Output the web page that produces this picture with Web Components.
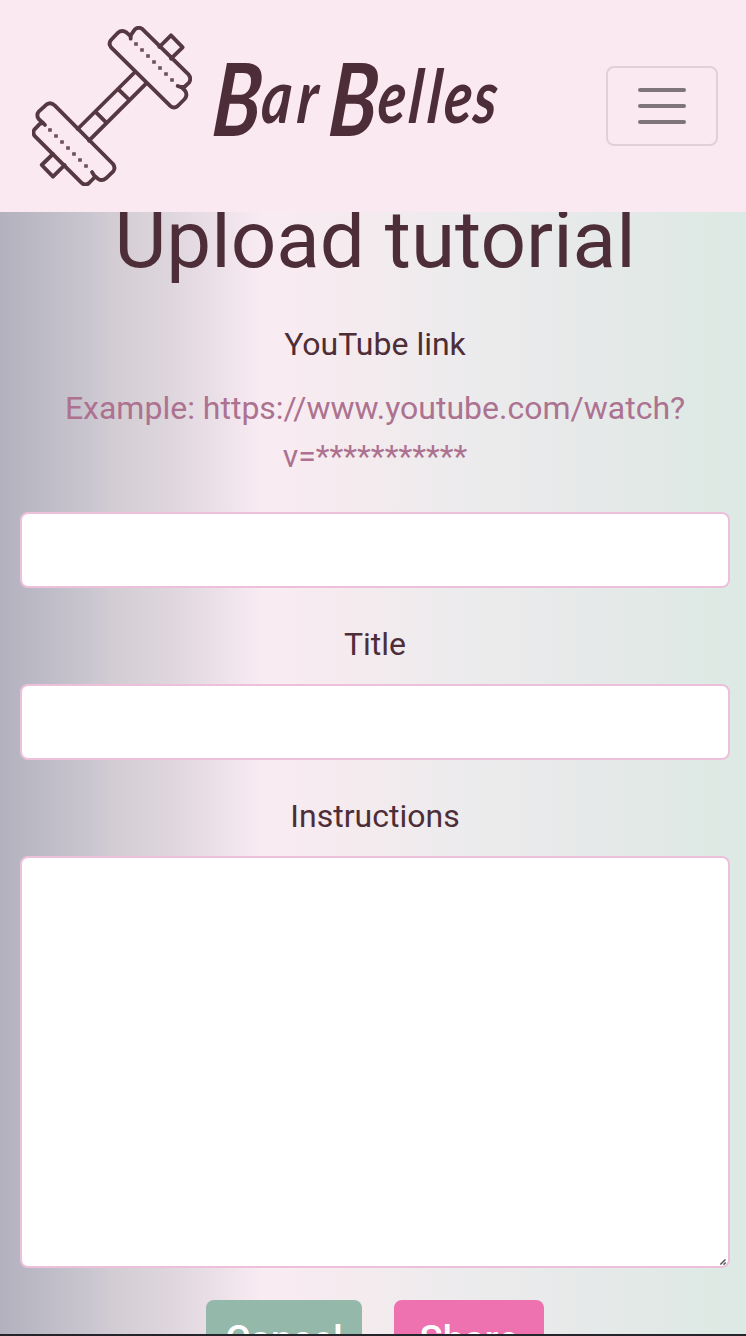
<!DOCTYPE html>
<html lang="en">
<head>
<meta charset="utf-8">
<title>BarBelles</title>
<style>
html,body{margin:0;height:100%;overflow:hidden}
body{font-family:Roboto,"Liberation Sans",sans-serif;color:#4d2e38}
</style>
</head>
<body>
<upload-page></upload-page>
<script>
const define=(name,html)=>customElements.define(name,class extends HTMLElement{
  constructor(){super();this.attachShadow({mode:'open'}).innerHTML=html;}
});

define('barbell-icon',`<style>:host{display:block;width:160px;height:160px}svg{display:block}</style>
<svg width="160" height="160" viewBox="36 33 480 480" fill="none" stroke="#553841" stroke-width="11.5" stroke-linejoin="round" stroke-linecap="round">
<path d="M332 71V64L320 53Q306 43 293 54L273 75Q264 86 274 98L450 272Q462 282 473 273L494 252Q504 240 495 227L485 217L473 213"/>
<path d="M332 61L344 44Q356 33 368 43L506 179Q515 190 507 203L493 216H485"/>
<path d="M418 96L453 61L488 97L453 131"/>
<path d="M345 171L173 342M379 205L207 377M294 222L327 254M226 290L259 323"/>
<path d="M75 330L68 323L56 312Q48 300 56 290L80 268Q92 260 104 271L279 447Q288 459 279 470L258 490Q246 500 234 491L223 482L216 471"/>
<path d="M68 323L58 328L43 344Q36 354 46 365L184 503Q196 514 207 504L225 486"/>
<path d="M99 417L65 450L99 485L134 450"/>
<path stroke-linecap="butt" stroke="#6b505b" stroke-width="11" d="M342.500 87h11M360.500 105h11M378.500 123h11M396.500 141h11M414.500 159h11M432.500 177h11M450.500 195h11M84.500 345h11M102.500 363h11M120.500 381h11M138.500 399h11M156.500 417h11M174.500 435h11M192.500 453h11"/>
</svg>`);

define('brand-name',`<style>:host{display:block;width:300px;height:90px}svg{display:block;overflow:visible}
text{font-family:Lato,sans-serif;font-style:italic;font-weight:700;fill:#4d2e38}.b{font-size:101px}.s{font-size:74px}</style>
<svg width="300" height="90"><text transform="translate(11 0) skewX(-5) scale(.78 1)" y="62"><tspan class="b" x="0" y="75">B</tspan><tspan class="s" x="62 108" y="62">ar</tspan><tspan class="b" x="149" y="75">B</tspan><tspan class="s" x="211 251 275 296 334" y="62">elles</tspan></text></svg>`);

define('menu-toggle',`<style>:host{display:block}button{display:flex;flex-direction:column;justify-content:center;align-items:center;gap:12px;width:112px;height:80px;box-sizing:border-box;border:2px solid #e1d0d8;border-radius:8px;background:none;padding:0}
i{width:48px;height:4px;border-radius:2px;background:#7e757b}</style><button aria-label="Menu"><i></i><i></i><i></i></button>`);

define('site-header',`<style>:host{display:flex;position:relative;z-index:1;align-items:center;height:212px;box-sizing:border-box;padding:0 28px 0 32px;background:#fbe9f1}
brand-name{margin-left:14px}menu-toggle{margin-left:auto}</style>
<barbell-icon></barbell-icon><brand-name></brand-name><menu-toggle></menu-toggle>`);

define('form-field',`<style>:host{display:block;margin-bottom:32px;text-align:center;font-size:32px;line-height:48px}
.label{margin-bottom:16px}::slotted(p){margin:0 0 32px;color:#ac7290}</style>
<div class="label"><slot name="label"></slot></div><slot name="hint"></slot><slot></slot>`);

define('text-box',`<style>:host{display:block;position:relative;height:76px}
input{display:block;width:100%;height:100%;box-sizing:border-box;border:2px solid #ecc0da;border-radius:8px;background:#fff;padding:12px 24px;font:inherit;outline:none}
</style><input>`);

define('text-area-box',`<style>:host{display:block;position:relative;height:412px}
textarea{display:block;width:100%;height:100%;box-sizing:border-box;border:2px solid #ecc0da;border-radius:8px;background:#fff;padding:12px 24px;font:inherit;resize:none;outline:none}
svg{position:absolute;right:4px;bottom:3px}</style><textarea></textarea>
<svg width="6" height="6" viewBox="0 0 6 6" stroke="#555" stroke-width="1.5"><path d="M.3 5.500L5.500 .5M3.500 5.700L5.700 3.500"/></svg>`);

define('action-button',`<style>:host{display:block}button{display:block;width:var(--w);height:80px;border:0;border-radius:8px;background:var(--bg);color:#fff;padding:0;font:500 38.4px/70px Roboto,sans-serif}</style><button><slot></slot></button>`);

define('upload-page',`<style>:host{display:block;height:1336px;overflow:hidden;box-sizing:border-box;border-bottom:2px solid #24242a;
background:linear-gradient(90deg,#b2b1bd 0,#cac6d0 90px,#d3cdd3 115px,#ddd5dc 165px,#e7dce4 200px,#f9ebf2 262px,#f5ebef 350px,#edebed 450px,#e6e9e9 600px,#dfe9e5 690px,#dde9e4 746px)}
main{padding:0 16px 0 20px}
h1{margin:-20px 0 32px;text-align:center;font-size:80px;line-height:96px;font-weight:400}
.actions{display:flex;justify-content:center;gap:32px}</style>
<site-header></site-header>
<main><h1>Upload tutorial</h1>
<form-field><span slot="label">YouTube link</span><p slot="hint">Example: https://www.youtube.com/watch?<br>v=***********</p><text-box></text-box></form-field>
<form-field><span slot="label">Title</span><text-box></text-box></form-field>
<form-field><span slot="label">Instructions</span><text-area-box></text-area-box></form-field>
<div class="actions"><action-button style="--w:156px;--bg:#94b8aa">Cancel</action-button><action-button style="--w:150px;--bg:#ee71b0">Share</action-button></div>
</main>`);
</script>
</body>
</html>
